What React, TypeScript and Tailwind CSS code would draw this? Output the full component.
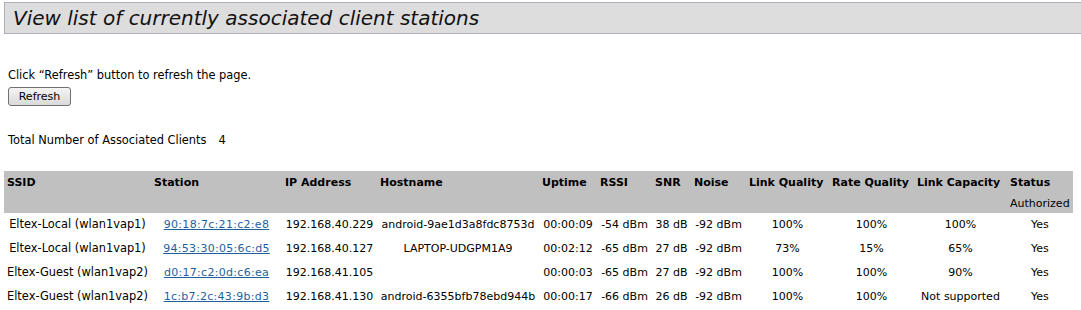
import React from 'react';

type Client = {
  ssid: string;
  mac: string;
  ip: string;
  host: string;
  uptime: string;
  rssi: string;
  snr: string;
  noise: string;
  linkQ: string;
  rateQ: string;
  linkCap: string;
  status: string;
};

const clients: Client[] = [
  { ssid: 'Eltex-Local (wlan1vap1)', mac: '90:18:7c:21:c2:e8', ip: '192.168.40.229', host: 'android-9ae1d3a8fdc8753d', uptime: '00:00:09', rssi: '-54 dBm', snr: '38 dB', noise: '-92 dBm', linkQ: '100%', rateQ: '100%', linkCap: '100%', status: 'Yes' },
  { ssid: 'Eltex-Local (wlan1vap1)', mac: '94:53:30:05:6c:d5', ip: '192.168.40.127', host: 'LAPTOP-UDGPM1A9', uptime: '00:02:12', rssi: '-65 dBm', snr: '27 dB', noise: '-92 dBm', linkQ: '73%', rateQ: '15%', linkCap: '65%', status: 'Yes' },
  { ssid: 'Eltex-Guest (wlan1vap2)', mac: 'd0:17:c2:0d:c6:ea', ip: '192.168.41.105', host: '', uptime: '00:00:03', rssi: '-65 dBm', snr: '27 dB', noise: '-92 dBm', linkQ: '100%', rateQ: '100%', linkCap: '90%', status: 'Yes' },
  { ssid: 'Eltex-Guest (wlan1vap2)', mac: '1c:b7:2c:43:9b:d3', ip: '192.168.41.130', host: 'android-6355bfb78ebd944b', uptime: '00:00:17', rssi: '-66 dBm', snr: '26 dB', noise: '-92 dBm', linkQ: '100%', rateQ: '100%', linkCap: 'Not supported', status: 'Yes' },
];

const th = 'text-left font-bold align-middle px-[3px] pt-[4px] whitespace-nowrap';
const td = 'text-center align-middle px-[3px] whitespace-nowrap';

export default function App() {
  return (
    <div className="w-[1081px] h-[310px] overflow-hidden bg-white text-[11px] text-black font-['DejaVu_Sans',sans-serif]">
      {/* Page title */}
      <div className="ml-[4px] mt-[2px] h-[32px] border-y border-l border-[#adb1c0] bg-[#dddddd] pl-[8px] flex items-center">
        <h1 className="italic text-[20px] leading-none text-[#111]">View list of currently associated client stations</h1>
      </div>

      <div className="px-[8px] text-[11.4px]">
        <p className="mt-[34px] leading-[14px]">Click “Refresh” button to refresh the page.</p>
        <button className="mt-[5px] h-[19px] w-[63px] rounded-[3px] border border-[#707070] bg-gradient-to-b from-[#f4f4f4] to-[#dadada] text-[11px] leading-none text-black">
          Refresh
        </button>
        <p className="mt-[27px] leading-[14px]">
          Total Number of Associated Clients<span className="ml-[12px]">4</span>
        </p>
      </div>

      <table className="ml-[4px] mt-[24px] table-fixed border-collapse">
        <thead className="bg-[#c0c0c0]">
          <tr className="h-[21px]">
            <th className={`${th} w-[147px]`}>SSID</th>
            <th className={`${th} w-[131px]`}>Station</th>
            <th className={`${th} w-[95px]`}>IP Address</th>
            <th className={`${th} w-[162px]`}>Hostname</th>
            <th className={`${th} w-[58px]`}>Uptime</th>
            <th className={`${th} w-[55px]`}>RSSI</th>
            <th className={`${th} w-[39px]`}>SNR</th>
            <th className={`${th} w-[55px]`}>Noise</th>
            <th className={`${th} w-[83px]`}>Link Quality</th>
            <th className={`${th} w-[85px]`}>Rate Quality</th>
            <th className={`${th} w-[93px]`}>Link Capacity</th>
            <th className={`${th} w-[50px]`}>Status</th>
          </tr>
          <tr className="h-[21px]">
            <th colSpan={11}></th>
            <th className="text-left font-normal align-middle px-[3px] pt-[4px] whitespace-nowrap">Authorized</th>
          </tr>
        </thead>
        <tbody>
          {clients.map((c) => (
            <tr key={c.mac} className="h-[24px]">
              <td className={`${td} text-[11.4px]`}>{c.ssid}</td>
              <td className={td}>
                <a href="#" className="text-[#1f5f9e] underline tracking-[0.3px]">{c.mac}</a>
              </td>
              <td className={td}>{c.ip}</td>
              <td className={td}>{c.host}</td>
              <td className={td}>{c.uptime}</td>
              <td className={td}>{c.rssi}</td>
              <td className={td}>{c.snr}</td>
              <td className={td}>{c.noise}</td>
              <td className={td}>{c.linkQ}</td>
              <td className={td}>{c.rateQ}</td>
              <td className={td}>{c.linkCap}</td>
              <td className={td}>{c.status}</td>
            </tr>
          ))}
        </tbody>
      </table>
    </div>
  );
}
